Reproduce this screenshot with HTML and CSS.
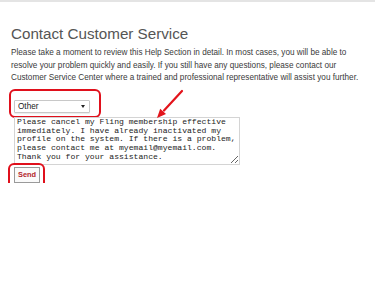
FILE: index.html
```html
<!DOCTYPE html>
<html lang="en">
<head>
<meta charset="utf-8">
<title>Contact Customer Service</title>
<link rel="stylesheet" href="styles.css">
</head>
<body>
<div class="page">
  <h1 class="title">Contact Customer Service</h1>
  <p class="intro">Please take a moment to review this Help Section in detail. In most cases, you will be able to resolve your problem quickly and easily. If you still have any questions, please contact our Customer Service Center where a trained and professional representative will assist you further.</p>
  <form class="form">
    <div class="select-wrap">
      <select class="topic">
        <option>Other</option>
      </select>
      <span class="caret"></span>
      <span class="mark mark-select"></span>
    </div>
    <div class="msg-wrap">
      <textarea class="msg">Please cancel my Fling membership effective
immediately. I have already inactivated my
profile on the system. If there is a problem,
please contact me at myemail@myemail.com.
Thank you for your assistance.</textarea>
      <svg class="arrow" width="34" height="34" viewBox="0 0 34 34">
        <line x1="27" y1="2" x2="9" y2="21.5" stroke="#e3141b" stroke-width="2.2" stroke-linecap="round"/>
        <polygon points="2,29 5.2,19.7 11,25.1" fill="#e3141b"/>
      </svg>
    </div>
    <div class="send-wrap">
      <button type="button" class="send">Send</button>
      <span class="mark mark-send"></span>
    </div>
  </form>
</div>
</body>
</html>
```

FILE: styles.css
```css
html, body {
  margin: 0;
  padding: 0;
  background: #fff;
}
body {
  border-top: 2px solid #e4e4e4;
  font-family: "Liberation Sans", Arial, sans-serif;
  color: #333;
}
.page {
  padding: 0 11px;
}
.title {
  margin: 23px 0 4px;
  font-size: 15.2px;
  line-height: 18px;
  font-weight: normal;
  color: #555;
}
.intro {
  margin: 0;
  width: 356px;
  font-size: 8.2px;
  line-height: 12.6px;
  color: #3a3a3a;
}
.form {
  margin-top: 15px;
  padding-left: 3px;
  display: flex;
  flex-direction: column;
  align-items: flex-start;
}
.select-wrap {
  position: relative;
  width: 76px;
  height: 13px;
}
.topic {
  appearance: none;
  -webkit-appearance: none;
  display: block;
  width: 76px;
  height: 13px;
  margin: 0;
  padding: 0 0 0 3px;
  border: 1px solid #c8c8c8;
  border-radius: 1px;
  background: #fff;
  font-family: "Liberation Sans", Arial, sans-serif;
  font-size: 8.2px;
  line-height: 11px;
  color: #222;
  box-shadow: 0 1px 1px rgba(0,0,0,0.08);
}
.caret {
  position: absolute;
  right: 5px;
  top: 5px;
  width: 0;
  height: 0;
  border-left: 2.5px solid transparent;
  border-right: 2.5px solid transparent;
  border-top: 3px solid #222;
}
.mark {
  position: absolute;
  display: block;
  box-sizing: border-box;
  border: 2px solid #e0101c;
  border-radius: 6px;
  pointer-events: none;
}
.mark-select {
  left: -5px;
  top: -11px;
  width: 92px;
  height: 29px;
}
.msg-wrap {
  position: relative;
  margin-top: 4px;
}
.msg {
  display: block;
  box-sizing: border-box;
  width: 226px;
  height: 48px;
  margin: 0;
  padding: 0 1px 0 2px;
  border: 1px solid #d4d4d4;
  border-radius: 0;
  font-family: "Liberation Mono", "Courier New", monospace;
  font-size: 8.1px;
  line-height: 8.8px;
  color: #222;
  background: #fff;
  overflow: hidden;
  resize: both;
}
.arrow {
  position: absolute;
  left: 141px;
  top: -28px;
}
.send-wrap {
  position: relative;
  margin-top: 2px;
  width: 26px;
  height: 16px;
}
.send {
  display: block;
  box-sizing: border-box;
  width: 26px;
  height: 16px;
  margin: 0;
  padding: 0;
  border: 1px solid #9a9a9a;
  border-radius: 0;
  background: #fafafa;
  font-family: "Liberation Sans", Arial, sans-serif;
  font-size: 7.4px;
  font-weight: bold;
  color: #b3242a;
}
.mark-send {
  left: -6px;
  top: -4px;
  width: 37px;
  height: 30px;
}
```
